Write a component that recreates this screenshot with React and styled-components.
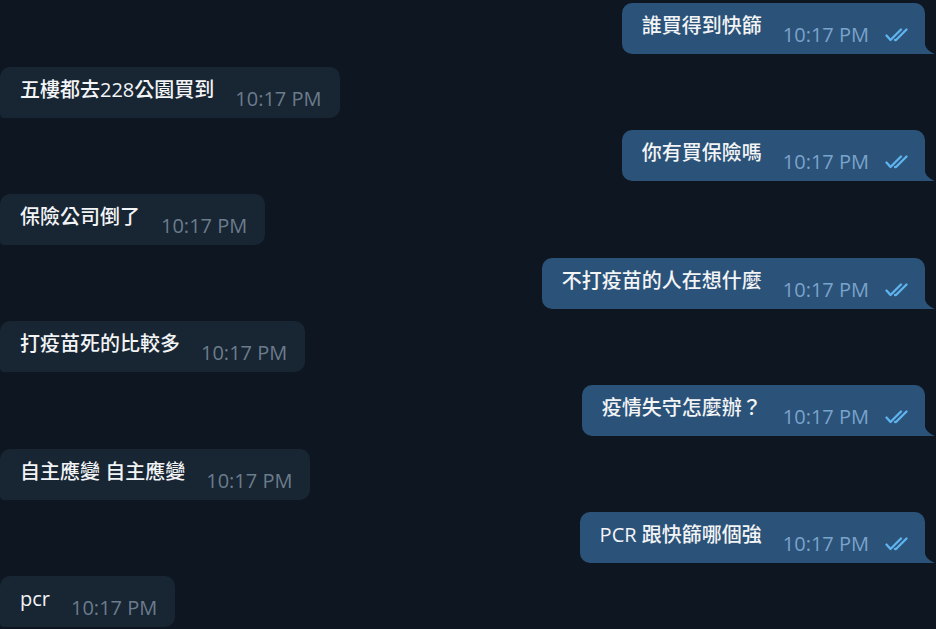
import React from "react";
import styled, { createGlobalStyle } from "styled-components";

const GlobalStyle = createGlobalStyle`
  html, body {
    margin: 0;
    padding: 0;
    background: #0e1621;
    height: 629px;
    overflow: hidden;
  }
  body {
    font-family: "Open Sans", "Noto Sans CJK TC", sans-serif;
    -webkit-font-smoothing: antialiased;
  }
`;

const Chat = styled.div`
  display: flex;
  flex-direction: column;
  gap: 12.67px;
  padding-top: 3px;
`;

const Bubble = styled.div`
  position: relative;
  display: flex;
  align-items: flex-start;
  box-sizing: border-box;
  height: 51px;
  padding: 10px ${(p) => (p.$out ? "12px" : "18px")} 0 20px;
  align-self: ${(p) => (p.$out ? "flex-end" : "flex-start")};
  margin-right: ${(p) => (p.$out ? "11px" : "0")};
  background: ${(p) => (p.$out ? "#2b5278" : "#182533")};
  border-radius: ${(p) => (p.$out ? "10px 10px 0 10px" : "10px 10px 10px 4px")};
`;

const Text = styled.span`
  font-size: 20px;
  font-weight: 500;
  line-height: 26px;
  color: #f2f4f6;
  white-space: nowrap;
`;

const Time = styled.span`
  font-family: "Open Sans", sans-serif;
  font-size: 20px;
  line-height: 26px;
  margin: 9px 0 0 21px;
  color: ${(p) => (p.$out ? "#7aa3cc" : "#6b7c8c")};
  white-space: nowrap;
`;

const Checks = styled.svg`
  width: 28px;
  height: 14px;
  margin: 15px 0 0 16px;
  flex-shrink: 0;
`;

const Tail = styled.svg`
  position: absolute;
  right: -10px;
  bottom: 0;
  width: 11px;
  height: 16px;
`;

const messages = [
  { out: true, text: "誰買得到快篩" },
  { out: false, text: "五樓都去228公園買到" },
  { out: true, text: "你有買保險嗎" },
  { out: false, text: "保險公司倒了" },
  { out: true, text: "不打疫苗的人在想什麼" },
  { out: false, text: "打疫苗死的比較多" },
  { out: true, text: "疫情失守怎麼辦？" },
  { out: false, text: "自主應變 自主應變" },
  { out: true, text: "PCR 跟快篩哪個強" },
  { out: false, text: "pcr" },
];

function DoubleCheck() {
  return (
    <Checks viewBox="0 0 28 14" fill="none" stroke="#5fb4f0" strokeWidth="2.3" strokeLinecap="round" strokeLinejoin="round">
      <path d="M1.5 7.5 L5.5 12 L16 1.5" />
      <path d="M10 12 L11 12 L21.5 1.5" />
    </Checks>
  );
}

function Message({ out, text }) {
  return (
    <Bubble $out={out}>
      <Text>{text}</Text>
      <Time $out={out}>10:17 PM</Time>
      {out && <DoubleCheck />}
      {out && (
        <Tail viewBox="0 0 11 16">
          <path d="M0 0 C0 8 3 13 11 16 L0 16 Z" fill="#2b5278" />
        </Tail>
      )}
    </Bubble>
  );
}

export default function App() {
  return (
    <>
      <GlobalStyle />
      <Chat>
        {messages.map((m, i) => (
          <Message key={i} out={m.out} text={m.text} />
        ))}
      </Chat>
    </>
  );
}
